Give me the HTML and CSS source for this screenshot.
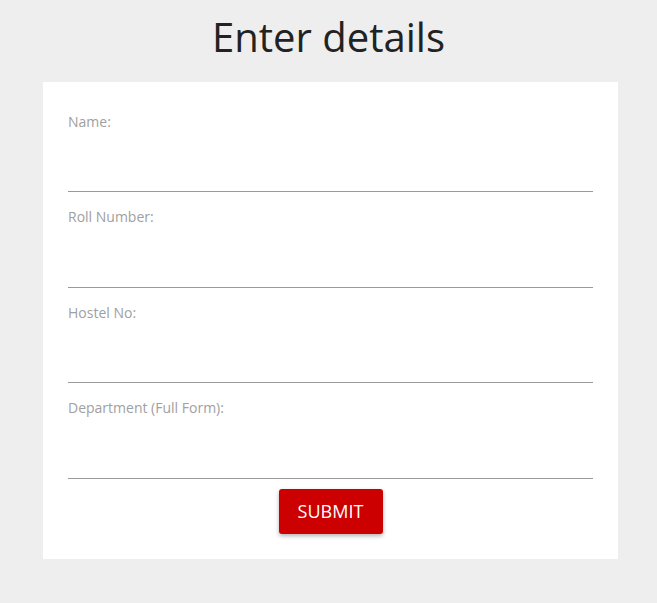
FILE: index.html
```html
<!DOCTYPE html>
<html>
<head>
<meta charset="utf-8">
<link rel="stylesheet" href="styles.css">
</head>
<body>
<h1 class="title">Enter details</h1>
<form class="card">
  <div class="field">
    <label class="label">Name:</label>
    <input class="input" type="text">
  </div>
  <div class="field">
    <label class="label">Roll Number:</label>
    <input class="input" type="text">
  </div>
  <div class="field">
    <label class="label">Hostel No:</label>
    <input class="input" type="text">
  </div>
  <div class="field">
    <label class="label">Department (Full Form):</label>
    <input class="input" type="text">
  </div>
  <div class="actions">
    <button class="submit" type="button">SUBMIT</button>
  </div>
</form>
</body>
</html>
```
FILE: styles.css
```css
html, body {
  margin: 0;
  padding: 0;
  background: #eeeeee;
  font-family: "Open Sans", "Noto Sans", sans-serif;
}
.title {
  margin: 0;
  height: 82px;
  box-sizing: border-box;
  padding-top: 9px;
  text-align: center;
  font-weight: 400;
  font-size: 40px;
  line-height: 56px;
  color: #222;
}
.card {
  display: flex;
  flex-direction: column;
  margin: 0 39px 0 43px;
  background: #fff;
  padding: 15px 25px 25px;
}
.field {
  display: flex;
  flex-direction: column;
  padding-top: 16px;
}
.label {
  font-size: 14px;
  line-height: 18px;
  color: #a0a0a0;
}
.input {
  height: 61.4px;
  box-sizing: border-box;
  border: none;
  border-bottom: 1px solid #9a9a9a;
  outline: none;
  padding: 0;
  background: transparent;
}
.actions {
  display: flex;
  justify-content: center;
  padding-top: 10px;
}
.submit {
  width: 104px;
  height: 45px;
  border: none;
  border-radius: 3px;
  background: #cc0000;
  color: #fff;
  font-family: "Open Sans", "Noto Sans", sans-serif;
  font-size: 18px;
  box-shadow: 0 2px 4px rgba(0,0,0,0.3);
  padding: 0;
}
```
